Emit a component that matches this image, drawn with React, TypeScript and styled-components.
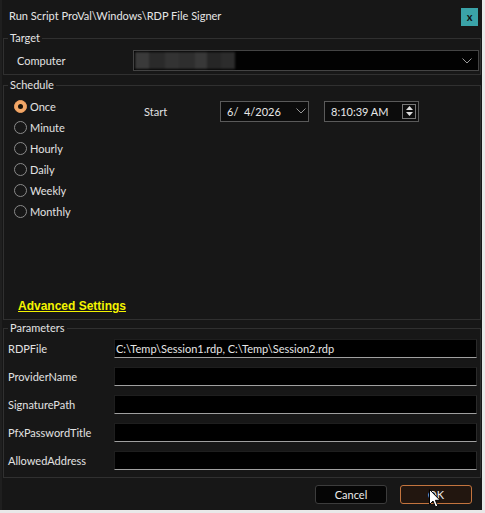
import * as React from 'react';
import styled, {createGlobalStyle} from 'styled-components';

const GlobalStyle = createGlobalStyle`
  html, body {
    margin: 0;
    padding: 0;
    background: #e9e9e9;
  }
  body {
    font-family: Lato, "Noto Sans", sans-serif;
    font-size: 11px;
    color: #e2e2e2;
  }
`

const Window = styled.div`
  position: relative;
  width: 482px;
  height: 510px;
  box-sizing: border-box;
  background: #171717;
  border-left: 2px solid #1f1f1f;
  display: flex;
  flex-direction: column;
`

const TitleBar = styled.div`
  height: 31px;
  display: flex;
  align-items: center;
  justify-content: space-between;
  padding: 0 4px 0 7px;
  font-size: 11px;
  color: #e6e6e6;
`

const CloseButton = styled.div`
  width: 17px;
  height: 18px;
  margin-top: 2px;
  background: #3aa3a8;
  color: #111;
  font-weight: bold;
  font-size: 11px;
  display: flex;
  align-items: center;
  justify-content: center;
  line-height: 1;
`

const Group = styled.fieldset<{ $height: number }>`
  margin: 0 1px 0 1px;
  padding: 0;
  height: ${p => p.$height}px;
  box-sizing: border-box;
  border: 1px solid #303030;
  min-width: 0;
  position: relative;
`

const Legend = styled.legend`
  margin-left: 4px;
  padding: 0 2px;
  line-height: 14px;
  color: #e4e4e4;
`

const Row = styled.div`
  display: flex;
  align-items: center;
`

const ComputerRow = styled(Row)`
  padding: 5px 1px 0 13px;
`

const FieldLabel = styled.span<{ $width: number }>`
  width: ${p => p.$width}px;
  flex: none;
  color: #e2e2e2;
`

const Combo = styled.div`
  flex: 1;
  height: 21px;
  box-sizing: border-box;
  border: 1px solid #444;
  background: #020202;
  display: flex;
  align-items: center;
  padding: 0 6px 0 1px;
`

const Blur = styled.div`
  display: flex;
  height: 17px;
  filter: blur(1.2px);
`

const Patch = styled.div<{ $w: number; $c: string }>`
  width: ${p => p.$w}px;
  background: ${p => p.$c};
`

const Chevron = styled.svg`
  margin-left: auto;
  flex: none;
`

const ScheduleBody = styled.div`
  display: flex;
  flex-direction: column;
  height: 226px;
  padding: 4px 0 0 10px;
`

const ScheduleTop = styled.div`
  display: flex;
  flex: 1;
`

const RadioList = styled.div`
  display: flex;
  flex-direction: column;
  width: 130px;
`

const RadioItem = styled.label`
  display: flex;
  align-items: center;
  height: 21px;
  color: #e2e2e2;
`

const RadioDot = styled.span<{ $on?: boolean }>`
  width: 13px;
  height: 13px;
  box-sizing: border-box;
  border-radius: 50%;
  margin-right: 3px;
  flex: none;
  border: 1px solid ${p => (p.$on ? '#f0a060' : '#8a8a8a')};
  background: ${p => (p.$on ? '#f3a868' : 'transparent')};
  display: flex;
  align-items: center;
  justify-content: center;
  &::after {
    content: '';
    width: 5px;
    height: 5px;
    border-radius: 50%;
    background: #1a1208;
    display: ${p => (p.$on ? 'block' : 'none')};
  }
`

const StartRow = styled(Row)`
  align-self: flex-start;
  margin-top: 4px;
  height: 22px;
`

const Picker = styled.div<{ $width: number }>`
  width: ${p => p.$width}px;
  height: 21px;
  box-sizing: border-box;
  border: 1px solid #5a5a5a;
  background: #0c0c0c;
  display: flex;
  align-items: center;
  padding: 0 2px 0 6px;
  color: #e8e8e8;
`

const Spinner = styled.div`
  margin-left: auto;
  width: 14px;
  height: 15px;
  box-sizing: border-box;
  border: 1px solid #777;
  display: flex;
  flex-direction: column;
  align-items: center;
  justify-content: space-around;
`

const AdvancedLink = styled.a`
  display: block;
  margin: 0 0 9px 4px;
  font-family: "Liberation Sans", Arial, sans-serif;
  font-weight: bold;
  font-size: 12px;
  color: #f4f400;
  text-decoration: underline;
`

const ParamList = styled.div`
  display: flex;
  flex-direction: column;
  gap: 9px;
  padding: 4px 3px 0 4px;
`

const TextInput = styled.div`
  flex: 1;
  height: 19px;
  box-sizing: border-box;
  background: #000;
  border: 1px solid #1e1e1e;
  border-bottom: 1px solid #a0a0a0;
  border-right-color: #2a2a2a;
  display: flex;
  align-items: center;
  padding-left: 1px;
  color: #e6e6e6;
  white-space: nowrap;
`

const Footer = styled.div`
  display: flex;
  justify-content: flex-end;
  gap: 13px;
  padding: 7px 10px 0 0;
`

const Button = styled.div<{ $primary?: boolean }>`
  width: 72px;
  height: 19px;
  box-sizing: border-box;
  border-radius: 3px;
  border: 1px solid ${p => (p.$primary ? '#c3743e' : '#3c3c3c')};
  background: ${p => (p.$primary ? '#22160f' : '#050505')};
  color: #ececec;
  display: flex;
  align-items: center;
  justify-content: center;
`

const Pointer = styled.svg`
  position: absolute;
  left: 427px;
  top: 489px;
`

const blurPatches: [number, string][] = [
  [14, '#3a3a3a'], [16, '#2a2a2a'], [14, '#333'], [16, '#2e2e2e'],
  [12, '#383838'], [14, '#262626'], [14, '#2c2c2c'],
]

const radios = ['Once', 'Minute', 'Hourly', 'Daily', 'Weekly', 'Monthly']

const params = [
  {name: 'RDPFile', value: 'C:\\Temp\\Session1.rdp, C:\\Temp\\Session2.rdp'},
  {name: 'ProviderName', value: ''},
  {name: 'SignaturePath', value: ''},
  {name: 'PfxPasswordTitle', value: ''},
  {name: 'AllowedAddress', value: ''},
]

const Caret = () => (
  <Chevron width="10" height="6" viewBox="0 0 10 6">
    <path d="M0.5 0.5 L5 5 L9.5 0.5" fill="none" stroke="#9a9a9a" strokeWidth="1" />
  </Chevron>
)

export default function App() {
  return (
    <>
      <GlobalStyle />
      <Window>
        <TitleBar>
          <span>Run Script ProVal\Windows\RDP File Signer</span>
          <CloseButton>x</CloseButton>
        </TitleBar>

        <Group $height={44}>
          <Legend>Target</Legend>
          <ComputerRow>
            <FieldLabel $width={116}>Computer</FieldLabel>
            <Combo>
              <Blur>
                {blurPatches.map(([w, c], i) => <Patch key={i} $w={w} $c={c} />)}
              </Blur>
              <Caret />
            </Combo>
          </ComputerRow>
        </Group>

        <Group $height={242} style={{marginTop: 3}}>
          <Legend>Schedule</Legend>
          <ScheduleBody>
            <ScheduleTop>
              <RadioList>
                {radios.map((r, i) => (
                  <RadioItem key={r}>
                    <RadioDot $on={i === 0} />
                    {r}
                  </RadioItem>
                ))}
              </RadioList>
              <StartRow>
                <FieldLabel $width={76}>Start</FieldLabel>
                <Picker $width={89}>
                  <span>6/&nbsp;&nbsp;4/2026</span>
                  <Caret />
                </Picker>
                <Picker $width={95} style={{marginLeft: 15}}>
                  <span>8:10:39 AM</span>
                  <Spinner>
                    <svg width="7" height="4" viewBox="0 0 7 4"><path d="M0 4 L3.5 0 L7 4Z" fill="#ddd" /></svg>
                    <svg width="7" height="4" viewBox="0 0 7 4"><path d="M0 0 L3.5 4 L7 0Z" fill="#ddd" /></svg>
                  </Spinner>
                </Picker>
              </StartRow>
            </ScheduleTop>
            <AdvancedLink>Advanced Settings</AdvancedLink>
          </ScheduleBody>
        </Group>

        <Group $height={157} style={{marginTop: 1}}>
          <Legend>Parameters</Legend>
          <ParamList>
            {params.map(p => (
              <Row key={p.name}>
                <FieldLabel $width={106}>{p.name}</FieldLabel>
                <TextInput>{p.value}</TextInput>
              </Row>
            ))}
          </ParamList>
        </Group>

        <Footer>
          <Button>Cancel</Button>
          <Button $primary>OK</Button>
        </Footer>

        <Pointer width="12" height="19" viewBox="0 0 12 19">
          <path d="M0.5 0.5 L0.5 15.5 L4 12 L6.5 18 L8.8 17 L6.4 11.3 L11 11.3 Z" fill="#fff" stroke="#000" strokeWidth="1" />
        </Pointer>
      </Window>
    </>
  );
}
